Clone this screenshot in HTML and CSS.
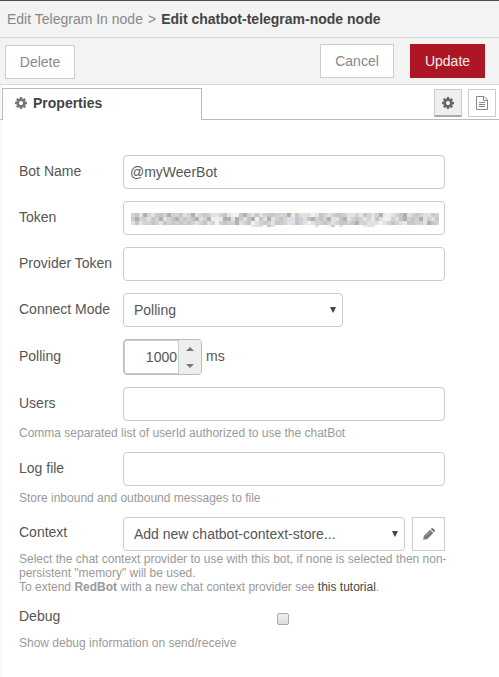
FILE: index.html
```html
<!DOCTYPE html>
<html lang="en">
<head>
<meta charset="utf-8">
<title>Edit chatbot-telegram-node node</title>
<link rel="stylesheet" href="styles.css">
</head>
<body>
<svg class="defs" aria-hidden="true">
  <symbol id="gear" viewBox="0 0 1536 1536"><path d="M1024 768q0-106-75-181t-181-75-181 75-75 181 75 181 181 75 181-75 75-181zm512-109v222q0 12-8 23t-20 13l-185 28q-19 54-39 91 35 50 107 138 10 12 10 25t-9 23q-27 37-99 108t-94 71q-12 0-26-9l-138-108q-44 23-91 38-16 136-29 186-7 28-36 28H657q-14 0-24.500-8.500T621 1506l-28-184q-49-16-90-37l-141 107q-10 9-25 9-14 0-25-11-126-114-165-168-7-10-7-23 0-12 8-23 15-21 51-66.500t54-70.500q-27-50-41-99L29 913q-13-2-21-12.500T0 877V655q0-12 8-23t19-13l186-28q14-46 39-92-40-57-107-138-10-12-10-24 0-10 9-23 26-36 98.500-107.500T337 135q13 0 26 10l138 107q44-23 91-38 16-136 29-186 7-28 36-28h222q14 0 24.500 8.500T915 30l28 184q49 16 90 37l142-107q9-9 24-9 13 0 25 10 129 119 165 170 7 8 7 22 0 12-8 23-15 21-51 66.500t-54 70.500q26 50 41 98l183 28q13 2 21 12.500t8 23.500z"/></symbol>
</svg>
<header class="title"><span>Edit Telegram In node</span><span class="sep">&gt;</span><b>Edit chatbot-telegram-node node</b></header>
<div class="toolbar">
  <button class="btn delete">Delete</button>
  <button class="btn cancel">Cancel</button>
  <button class="btn primary">Update</button>
</div>
<nav class="tabs">
  <div class="gap-left"></div>
  <div class="tab"><svg class="icon"><use href="#gear"/></svg>Properties</div>
  <div class="tab-tools">
    <button class="tool active"><svg class="icon"><use href="#gear"/></svg></button>
    <button class="tool"><svg class="doc" viewBox="0 0 12 14"><path d="M.5.5H8l3.500 3.500v9.500H.5zM7.500.5v4h4M3 6.500h6M3 8.500h6M3 10.500h6"/></svg></button>
  </div>
</nav>
<main class="form">
  <div class="row"><label>Bot Name</label><div class="input">@myWeerBot</div></div>
  <div class="row"><label>Token</label><div class="input"><svg class="mosaic" id="mosaic" viewBox="0 0 308 16" shape-rendering="crispEdges"></svg></div></div>
  <div class="row"><label>Provider Token</label><div class="input"></div></div>
  <div class="row"><label>Connect Mode</label><div class="input select mode">Polling<svg class="caret" viewBox="0 0 6 6"><path d="M0 0h6L3 6z"/></svg></div></div>
  <div class="row polling"><label>Polling</label>
    <div class="spinner"><span class="value">1000</span><span class="arrows"><svg viewBox="0 0 8 4"><path d="M4 0l4 4H0z"/></svg><svg viewBox="0 0 8 4"><path d="M0 0h8L4 4z"/></svg></span></div><span class="unit">ms</span>
  </div>
  <div class="row"><label>Users</label><div class="input"></div></div>
  <p class="hint">Comma separated list of userId authorized to use the chatBot</p>
  <div class="row"><label>Log file</label><div class="input"></div></div>
  <p class="hint">Store inbound and outbound messages to file</p>
  <div class="row context"><label>Context</label><div class="input select store">Add new chatbot-context-store...<svg class="caret" viewBox="0 0 6 6"><path d="M0 0h6L3 6z"/></svg></div>
    <button class="pencil"><svg viewBox="0 0 12 12"><path d="M.2 11.800l.6-3.900L7 1.700l3.300 3.300L4.100 11.200zM7.700 1l.8-.8q.7-.5 1.400 0l1.900 1.900q.5.700 0 1.400l-.8.800z"/><path class="shine" d="M2.700 7.900l4.400-4.400M1.400 9.600l1.100 1.100"/></svg></button>
  </div>
  <p class="hint wide">Select the chat context provider to use with this bot, if none is selected then non-<br>persistent "memory" will be used.<br>To extend <b>RedBot</b> with a new chat context provider see <a>this tutorial</a>.</p>
  <div class="row debug"><label>Debug</label><span class="checkbox"></span></div>
  <p class="hint last">Show debug information on send/receive</p>
</main>
<script src="mosaic.js"></script>
</body>
</html>
```
FILE: styles.css
```css
* { box-sizing: border-box; }
body {
  margin: 0;
  height: 677px;
  overflow: hidden;
  background: #fff;
  box-shadow: inset 3px 0 3px -2px #f2f2f2;
  color: #555;
  font: 14px/20px "Liberation Sans", Arial, sans-serif;
}
button { font: inherit; padding: 0; }
.defs { position: absolute; width: 0; height: 0; }
.title {
  display: flex;
  height: 38px;
  padding: 8px 7px 0;
  border-top: 1px solid #4d4a4d;
  border-bottom: 1px solid #d8d8d8;
  background: #f3f3f3;
  color: #888;
  white-space: nowrap;
}
.title .sep { margin: 0 5px; }
.title b { color: #444; }
.toolbar {
  display: flex;
  height: 47px;
  padding: 6px 14px 0 5px;
  border-bottom: 1px solid #d8d8d8;
  background: #f3f3f3;
}
.btn {
  height: 34px;
  border: 1px solid #ccc;
  background: #fff;
  color: #888;
}
.delete { width: 70px; margin-top: 1px; }
.cancel { width: 74px; margin-left: auto; }
.primary { width: 75px; margin-left: 16px; border-color: #ad1625; background: #ad1625; color: #eee; }
.tabs { display: flex; height: 35px; padding-top: 3px; }
.gap-left { width: 2px; border-bottom: 1px solid #bbb; }
.tab {
  display: flex;
  align-items: center;
  width: 200px;
  padding: 0 0 3px 12px;
  border: 1px solid #bbb;
  border-bottom: 0;
  color: #444;
  font-weight: bold;
}
.icon { width: 12px; height: 12px; fill: #777; }
.tab .icon { margin-right: 6px; }
.tab-tools {
  display: flex;
  flex: 1;
  justify-content: flex-end;
  gap: 6px;
  padding: 1px 3px 0 0;
  border-bottom: 1px solid #bbb;
}
.tool {
  display: flex;
  align-items: center;
  justify-content: center;
  width: 28px;
  height: 28px;
  border: 1px solid #ccc;
  background: #fff;
}
.tool.active { border-bottom: 2px solid #aaa; background: #efefef; }
.tool.active .icon { fill: #666; }
.doc { width: 12px; height: 14px; fill: none; stroke: #888; }
.form { padding: 35px 52px 0 19px; }
.row { display: flex; height: 34px; margin-bottom: 12px; }
.row label { width: 104px; padding-top: 6px; white-space: nowrap; }
.input {
  display: flex;
  align-items: center;
  width: 322px;
  height: 34px;
  padding: 0 6px;
  border: 1px solid #ccc;
  border-radius: 4px;
  background: #fff;
}
.select { justify-content: space-between; padding: 0 6px 0 10px; }
.mode { width: 220px; }
.store { width: 282px; }
.caret { width: 6px; height: 6px; fill: #444; }
.mosaic { width: 308px; height: 16px; margin: 6px 0 0 1px; flex: none; }
.polling { height: 36px; }
.polling label { padding-top: 7px; }
.spinner {
  display: flex;
  width: 79px;
  height: 36px;
  border: 1px solid #bbb;
  border-radius: 4px;
  box-shadow: inset 0 0 0 1px #ccc;
  overflow: hidden;
}
.value { flex: 1; padding: 7px 1px 0 0; text-align: right; }
.arrows {
  display: flex;
  flex-direction: column;
  align-items: center;
  justify-content: space-between;
  width: 23px;
  padding: 7px 1px 6px 0;
  border-left: 1px solid #ccc;
  background: #eee;
}
.arrows svg { width: 8px; height: 4px; fill: #777; }
.unit { margin: 7px 0 0 4px; }
.hint { margin: 0; color: #999; font-size: 12px; line-height: 14px; white-space: nowrap; }
.hint:not(.wide):not(.last) { margin: -7px 0 12px; }
.context { margin-bottom: 0; }
.context label { padding-top: 5px; }
.pencil {
  display: flex;
  align-items: center;
  justify-content: center;
  width: 33px;
  height: 34px;
  margin-left: 7px;
  padding-bottom: 1px;
  border: 1px solid #ccc;
  background: #fff;
}
.pencil svg { width: 12px; height: 12px; fill: #777; }
.pencil .shine { fill: none; stroke: #ccc; stroke-width: .6; }
.hint.wide { margin: 1px 0 8px; }
.hint a { color: #444; }
.debug { height: 28px; margin: 0; }
.debug label { padding-top: 4px; }
.checkbox {
  width: 12px;
  height: 12px;
  margin: 11px 0 0 154px;
  border: 1px solid #aaa;
  border-radius: 2px;
  background: linear-gradient(#eee, #dcdcdc);
}
.hint.last { margin: 6px 0 0; }
```
FILE: mosaic.js
```js
// Censored token: rows of 4px tiles, one palette letter per tile.
const palette = {
  a: "#f3f1f0", b: "#e2e2e2", c: "#d2d2d2", d: "#c4c6c8", e: "#b0b0b3",
  f: "#f2e5dc", g: "#dbe2eb", h: "#d9d0cb", i: "#e8f0f5", j: "#c2cbd2"
};
const rows = [
  "cdbecbjdcehcdbcebcdcgbcdbaadecgdbcjdchcefdbggabdhbcddcgbcfdcbheiabcdebcdhbgjc",
  "jehcgdcebcdecdcdebceaafeebejbdeadbegcdhbgjcbdecdcegbdebcjhbcfdgaicbdecdhebcgd",
  "bdgchdcbdcjcdcdcbcdbcacdhcebcdabcdcbdjcbgdcbabchdcbcdjcdehcbbgabcdcbfdjchbedc",
  "                              fbg jb          g  aj g     fgb"
];
let tiles = "";
rows.forEach((row, y) => [...row].forEach((key, x) => {
  if (palette[key]) tiles += `<rect x="${x * 4}" y="${y * 4}" width="4" height="${y === 3 ? 2 : 4}" fill="${palette[key]}"/>`;
}));
document.getElementById("mosaic").innerHTML = tiles;
```
